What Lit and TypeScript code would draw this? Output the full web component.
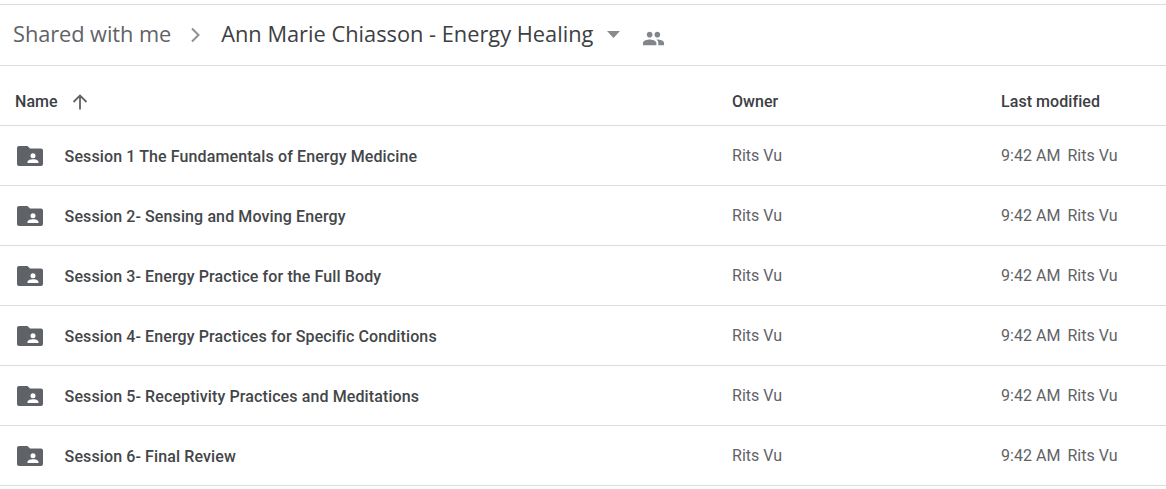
import { LitElement, html, css, svg } from "lit";
import { customElement } from "lit/decorators.js";

const rows = [
  "Session 1 The Fundamentals of Energy Medicine",
  "Session 2- Sensing and Moving Energy",
  "Session 3- Energy Practice for the Full Body",
  "Session 4- Energy Practices for Specific Conditions",
  "Session 5- Receptivity Practices and Meditations",
  "Session 6- Final Review",
];

@customElement("app-root")
export class AppRoot extends LitElement {
  static styles = css`
    :host { display: block; background: #fff; height: 489px; overflow: hidden; padding-top: 4px; box-sizing: border-box; font-family: Roboto, "Liberation Sans", sans-serif; }
    .crumbs { height: 60px; border-top: 1px solid #dadce0; border-bottom: 1px solid #dadce0; display: flex; align-items: center; padding-left: 13px; font-family: "Open Sans", Roboto, sans-serif; font-size: 21.8px; color: #3c4043; }
    .crumbs span { display: block; margin-bottom: 3px; }
    .crumbs .shared { color: #5f6368; letter-spacing: -.07px; }
    .chev { margin: 0 19px 0 19px; display: block; }
    .caret { margin: 0 0 1px 14px; display: block; }
    .people { margin: 6px 0 0 22px; display: block; }
    .row { display: grid; grid-template-columns: 732px 269px 1fr; height: 59px; border-bottom: 1px solid #dadce0; align-items: center; }
    .head { font-size: 16px; font-weight: 500; color: #3c4043; padding-top: 12px; height: 47px; letter-spacing: .06px; }
    .namehead { display: flex; align-items: center; padding-left: 15px; }
    .arrow { margin-left: 13px; display: block; }
    .name { display: flex; align-items: center; padding-left: 17px; font-size: 16px; font-weight: 500; color: #434649; letter-spacing: .11px; }
    .name span { margin-top: 1px; }
    .folder { display: block; margin-right: 21.6px; }
    .cell { font-size: 16px; color: #5f6368; margin-top: -1px; letter-spacing: .02px; }
    .time { margin-right: 7px; }
  `;

  render() {
    return html`
      <div class="crumbs">
        <span class="shared">Shared with me</span>
        <svg class="chev" width="12" height="16" viewBox="0 0 12 16"><path d="M2 1.500 8.500 8 2 14.500" fill="none" stroke="#8f8f94" stroke-width="2"/></svg>
        <span>Ann Marie Chiasson - Energy Healing</span>
        <svg class="caret" width="13" height="7" viewBox="0 0 13 7"><path d="M0 0h13L6.500 7z" fill="#8a8a8e"/></svg>
        <svg class="people" width="23" height="23" viewBox="0 0 24 24"><path fill="#80868b" d="M16 11c1.660 0 2.990-1.340 2.990-3S17.660 5 16 5c-1.660 0-3 1.340-3 3s1.340 3 3 3zm-8 0c1.660 0 2.990-1.340 2.990-3S9.660 5 8 5C6.340 5 5 6.340 5 8s1.340 3 3 3zm0 2c-2.330 0-7 1.170-7 3.500V19h14v-2.500c0-2.330-4.670-3.500-7-3.500zm8 0c-.29 0-.62.02-.97.05 1.160.84 1.970 1.970 1.970 3.450V19h6v-2.500c0-2.330-4.670-3.500-7-3.500z"/></svg>
      </div>
      <div class="row head">
        <div class="namehead">Name
          <svg class="arrow" width="18" height="18" viewBox="0 0 18 18"><path d="M9 16.500V3M2.500 9 9 2.500 15.500 9" fill="none" stroke="#5f6368" stroke-width="1.800"/></svg>
        </div>
        <div>Owner</div>
        <div>Last modified</div>
      </div>
      ${rows.map((r) => html`
        <div class="row">
          <div class="name">
            <svg class="folder" width="26" height="20" viewBox="0 0 26 20">${svg`<path fill="#5f6368" fill-rule="evenodd" d="M2 0h8.500l2.500 2.500h11a2 2 0 0 1 2 2V18a2 2 0 0 1-2 2H2a2 2 0 0 1-2-2V2a2 2 0 0 1 2-2zM16 7.200a2.500 2.500 0 1 0 0 5 2.500 2.500 0 0 0 0-5zM10.500 17h11v-1.300c0-1.700-3.700-2.500-5.500-2.500s-5.500.8-5.500 2.500z"/>`}</svg>
            <span>${r}</span>
          </div>
          <div class="cell">Rits Vu</div>
          <div class="cell"><span class="time">9:42 AM</span>Rits Vu</div>
        </div>
      `)}
    `;
  }
}
